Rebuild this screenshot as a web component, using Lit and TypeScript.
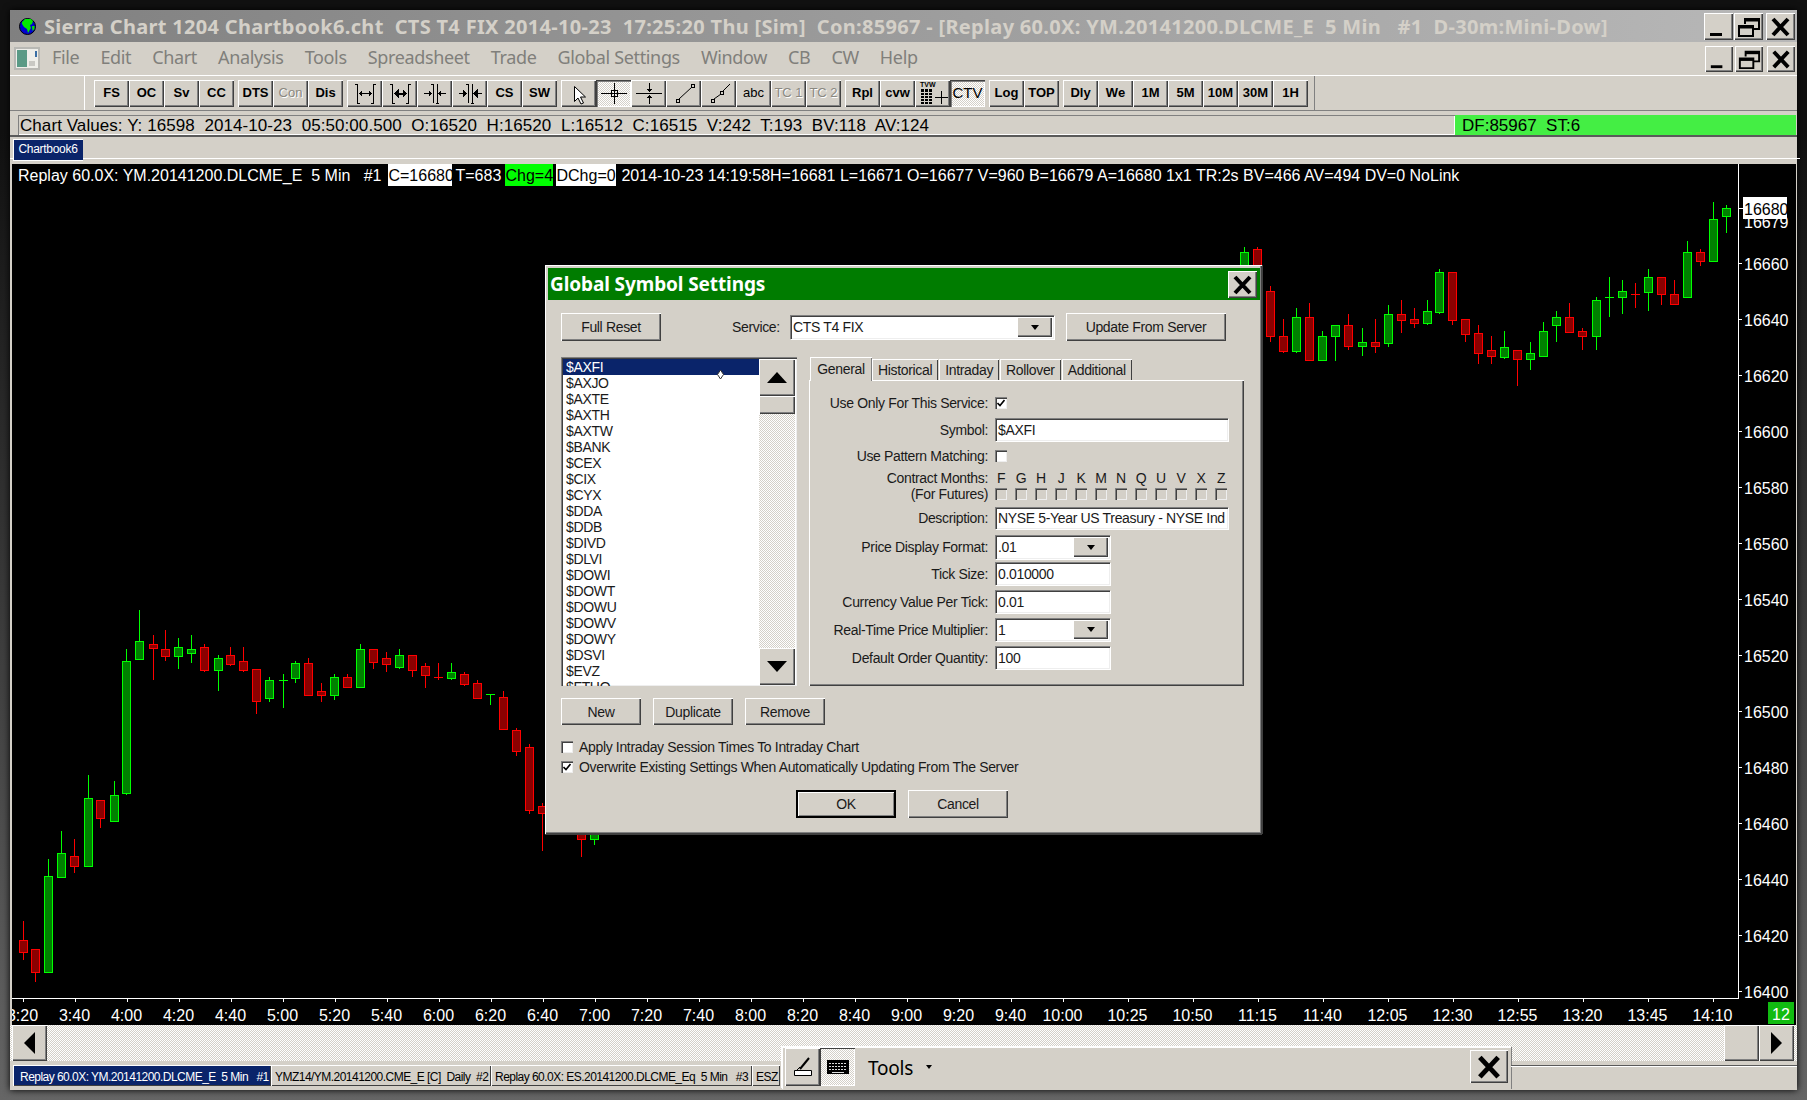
import { LitElement, html, css, svg } from "lit";
import { customElement } from "lit/decorators.js";

type C = [number, number, number, number, number, string];
// Candles measured from the reference: [x, wickTop, bodyTop, bodyBottom, wickBottom, colour]
const left: C[] = [
[63,995,1053,1088,1113,"r"],[99,1080,1080,1148,1178,"r"],[135,810,862,1148,1148,"g"],[172,726,792,863,863,"g"],
[208,750,801,830,852,"r"],[245,558,628,830,834,"g"],[281,633,633,686,717,"r"],[318,576,618,695,695,"g"],
[354,180,216,611,618,"g"],[390,63,156,209,209,"g"],[427,138,166,176,273,"r"],[463,123,181,200,216,"r"],
[499,147,175,200,240,"g"],[536,138,181,191,222,"g"],[572,165,175,242,249,"r"],[609,198,208,242,306,"g"],
[645,174,199,224,231,"r"],[681,174,217,242,249,"r"],[718,240,240,335,375,"r"],[754,264,274,326,339,"g"],
[791,255,274,275,357,"g"],[827,216,223,266,282,"g"],[863,207,222,317,317,"r"],[900,282,307,317,339,"r"],
[936,255,265,317,333,"g"],[972,255,265,293,297,"r"],[1009,165,181,293,297,"g"],[1045,181,181,218,240,"r"],
[1082,189,208,224,249,"r"],[1118,180,199,233,240,"g"],[1154,199,199,242,264,"r"],[1191,222,232,257,297,"r"],
[1227,222,265,266,273,"r"],[1264,222,250,266,273,"g"],[1300,249,256,284,291,"r"],[1336,273,283,326,326,"r"],
[1373,316,316,317,348,"g"],[1409,306,325,419,423,"r"],[1446,417,424,485,501,"r"],[1482,465,475,662,675,"r"],
[1518,642,652,671,786,"r"]];
const right: C[] = [
[12,205,220,300,300,"g"],[48,205,211,300,300,"r"],
[84,321,337,472,488,"r"],[120,420,472,515,521,"r"],[156,387,415,515,521,"g"],[192,372,415,542,545,"r"],
[228,456,472,542,542,"g"],[264,439,439,472,545,"g"],[300,405,439,500,513,"r"],[336,447,490,500,530,"g"],
[372,420,490,500,521,"r"],[408,378,406,491,503,"g"],[444,363,406,422,461,"r"],[480,387,421,431,446,"r"],
[516,363,397,431,437,"g"],[551,270,280,398,404,"g"],[587,280,280,422,437,"r"],[623,421,421,464,488,"r"],
[659,438,463,523,554,"r"],[695,471,514,532,554,"r"],[731,456,505,533,539,"g"],[767,514,514,541,621,"r"],
[803,489,523,541,572,"g"],[839,429,457,532,532,"g"],[875,397,415,439,488,"g"],[911,372,415,458,458,"r"],
[947,447,457,472,512,"r"],[983,354,364,472,512,"g"],[1019,294,355,356,413,"g"],[1055,303,337,355,404,"g"],
[1091,312,346,347,386,"r"],[1127,270,295,338,395,"g"],[1163,295,295,346,377,"r"],[1199,303,346,374,374,"r"],
[1235,186,220,355,355,"g"],[1271,210,220,247,260,"r"],[1307,69,121,247,247,"g"],[1343,78,88,112,161,"g"]];

const toPage = (d: C, sx: number, x0: number, y0: number): C => [
  Math.round(x0 + d[0] / sx), Math.round(y0 + d[1] / 3), Math.round(y0 + d[2] / 3),
  Math.round(y0 + d[3] / 3), Math.round(y0 + d[4] / 3), d[5]];

const candles: C[] = [
  ...left.map((d) => toPage(d, 2.8, 0, 590)),
  ...right.map((d) => toPage(d, 2.765, 1240, 180)),
  [581, 835, 835, 840, 858, "r"],
  [594, 835, 835, 840, 846, "g"],
];

const earlyTimes = ["3:20","3:40","4:00","4:20","4:40","5:00","5:20","5:40","6:00","6:20","6:40","7:00","7:20","7:40","8:00","8:20","8:40","9:00","9:20","9:40","10:00"];
const lateTimes = ["10:25","10:50","11:15","11:40","12:05","12:30","12:55","13:20","13:45","14:10"];
const prices = Array.from({ length: 14 }, (_, i) => 16660 - i * 20);

const symbols = ["$AXFI","$AXJO","$AXTE","$AXTH","$AXTW","$BANK","$CEX","$CIX","$CYX","$DDA","$DDB","$DIVD","$DLVI","$DOWI","$DOWT","$DOWU","$DOWV","$DOWY","$DSVI","$EVZ","$FTHO"];
const months = ["F","G","H","J","K","M","N","Q","U","V","X","Z"];

const I = (body: unknown) => html`<svg class="ic" viewBox="0 0 34 27" width="34" height="27" fill="none" stroke="#000" stroke-width="1" shape-rendering="crispEdges">${body}</svg>`;
const bar = (x: number) => svg`<path d="M${x + 0.5} 4V23"/>`;
const icons: Record<string, unknown> = {
  a: I(svg`<path d="M9.5 4V23M7 4h3M9 23h3M25.5 4V23M25 4h3M23 23h3M12 13.5h11M14 11.5l-2 2 2 2M21 11.5l2 2-2 2"/>`),
  b: I(svg`<path d="M9.5 4V23M7 4h3M9 23h3M25.5 4V23M25 4h3M23 23h3" /><path d="M12 13.5h11" stroke-width="2"/><path d="M15 10v7l-3-3.500zM20 10v7l3-3.500z" fill="#000"/>`),
  c: I(svg`${bar(15)}${bar(19)}<path d="M6 13.500h7M11 11.500l2 2-2 2M21 13.500h7M23 11.500l-2 2 2 2M13 4h3M18 23h3"/>`),
  d: I(svg`${bar(15)}${bar(19)}<path d="M6 13.500h5M24 13.500h5M13 4h3M18 23h3"/><path d="M10 10v7l3-3.500zM24 10v7l-3-3.500z" fill="#000"/>`),
  arrow: I(svg`<path d="M12.500 6.500v15l3.500-3.500 3 6 2.500-1-3-6h5z" fill="#fff" stroke="#000" shape-rendering="auto"/>`),
  cross: I(svg`<path d="M4 13.500h26M17.500 3v21"/><rect x="14.500" y="10.500" width="6" height="6"/>`),
  hline: I(svg`<path d="M4 13.500h26"/><path d="M17.500 3v8M17.500 16v8M15.500 9l2 2 2-2M15.500 18l2-2 2 2"/>`),
  line: I(svg`<rect x="9.500" y="19.500" width="3" height="3"/><rect x="24.500" y="4.500" width="3" height="3"/><path d="M12 19L25 7" shape-rendering="auto"/>`),
  ray: I(svg`<rect x="9.500" y="19.500" width="3" height="3"/><rect x="18.500" y="11.500" width="3" height="3"/><path d="M12 19l7-5M21 11l7-7" shape-rendering="auto"/>`),
  tvw: html`<svg class="ic" viewBox="0 0 34 27" width="34" height="27" shape-rendering="crispEdges"><text x="4" y="7" font-size="7" font-weight="700" font-family="Liberation Sans" fill="#000">TVW</text><path d="M5 9h11v15H5z" fill="#000"/><path d="M5 12.500h11M5 15.500h11M5 18.500h11M5 21.500h11M8.500 9v15M12.500 9v15" stroke="#d4d0c8"/><path d="M19 17.500h13M25.500 11v13" stroke="#000" fill="none"/></svg>`,
};

type B = { t?: string; i?: string; dis?: boolean; on?: boolean; bold?: boolean };
const groups: B[][] = [
  [{ t: "FS" }, { t: "OC" }, { t: "Sv" }, { t: "CC" }],
  [{ t: "DTS" }, { t: "Con", dis: true }, { t: "Dis" }],
  [{ i: "a" }, { i: "b" }, { i: "c" }, { i: "d" }, { t: "CS" }, { t: "SW" }],
  [{ i: "arrow" }, { i: "cross", on: true }, { i: "hline" }, { i: "line" }, { i: "ray" }, { t: "abc", bold: false }, { t: "TC 1", dis: true }, { t: "TC 2", dis: true }],
  [{ t: "Rpl" }, { t: "cvw" }, { i: "tvw" }, { t: "CTV", on: true, bold: false }],
  [{ t: "Log" }, { t: "TOP" }],
  [{ t: "Dly" }, { t: "We" }, { t: "1M" }, { t: "5M" }, { t: "10M" }, { t: "30M" }, { t: "1H" }],
];

const menus = ["File","Edit","Chart","Analysis","Tools","Spreadsheet","Trade","Global Settings","Window","CB","CW","Help"];
const tabs = ["General","Historical","Intraday","Rollover","Additional"];
const docTabs = ["YMZ14/YM.20141200.CME_E [C]  Daily  #2", "Replay 60.0X: ES.20141200.DLCME_Eq  5 Min   #3", "ESZ"];

const minBtn = html`<svg viewBox="0 0 29 27" width="100%" height="100%"><path d="M6 20h12v3H6z" fill="#000"/></svg>`;
const resBtn = html`<svg viewBox="0 0 29 27" width="100%" height="100%" fill="none" stroke="#000" stroke-width="2"><path d="M11 11V6h14v10h-6"/><path d="M11 7h14" stroke-width="3"/><path d="M5 13h14v10H5z" fill="#d4d0c8"/><path d="M5 14h14" stroke-width="3"/></svg>`;
const xBtn = html`<svg viewBox="0 0 29 27" width="100%" height="100%" stroke="#000" stroke-width="4"><path d="M7 6l15 16M22 6L7 22"/></svg>`;

@customElement("app-root")
export class AppRoot extends LitElement {
  static styles = css`
    :host { display: block; width: 1807px; height: 1100px; position: relative; overflow: hidden;
      background: linear-gradient(to bottom, #111 0, #111 12%, #666 100%);
      font-family: "Liberation Sans", Arial, sans-serif; color: #000; }
    .window { position: absolute; left: 10px; top: 10px; width: 1787px; height: 1080px; background: #d4d0c8;
      box-shadow: 0 0 7px #000; display: flex; flex-direction: column; }
    .title { height: 32px; flex: none; display: flex; align-items: center; background: linear-gradient(to right, #808080, #b8b8b8); color: #d4d0c8; }
    .title svg.globe { margin-left: 9px; flex: none; }
    .title .cap { margin-left: 8px; font: 700 20px "Noto Sans", sans-serif; white-space: pre; flex: 1; letter-spacing: 0.31px; }
    .wbtns { display: flex; flex: none; margin-right: 2px; gap: 1px; }
    .tb { width: 29px; height: 27px; background: #d4d0c8; box-shadow: inset 1px 1px #fff, inset -1px -1px #404040, inset -2px -2px #808080; }
    .wbtns .gap { margin-left: 2px; }
    .menu { height: 33px; flex: none; display: flex; align-items: center; border-bottom: 1px solid #fff; box-sizing: content-box; }
    .doc { margin-left: 4px; width: 26px; height: 23px; flex: none; }
    .menu .items { display: flex; margin-left: 12px; gap: 21px; flex: 1; color: #807f7b; font: 18px/28px "Noto Sans", sans-serif; letter-spacing: -0.35px; padding-bottom: 3px; }
    .menu .wbtns { margin-right: 2px; gap: 2px; }
    .menu .tb { width: 28px; height: 26px; }
    .toolbar { height: 35px; flex: none; display: flex; align-items: center; padding-left: 74px; border-bottom: 1px solid #808080; box-sizing: border-box; }
    .toolbar .holder { display: flex; align-items: center; border-left: 1px solid #fff; padding-left: 9px; border-right: 1px solid #808080; padding-right: 6px; height: 34px; }
    .grp { display: flex; margin-right: 4px; }
    .grp:last-child { margin-right: 0; }
    .btn { width: 35px; height: 27px; flex: none; display: flex; align-items: center; justify-content: center; box-sizing: border-box;
      background: #d4d0c8; box-shadow: inset 1px 1px #fff, inset -1px -1px #404040, inset -2px -2px #808080; font-size: 13px; font-weight: 700; overflow: hidden; padding-bottom: 2px; }
    .btn:has(svg) { padding-bottom: 0; }
    .btn.dis { color: #8a8880; font-weight: 400; text-shadow: 1px 1px #fff; }
    .btn.reg { font-weight: 400; }
    .btn.on { background-color: #fff; background-image: conic-gradient(#fff 25%, #d4d0c8 0 50%, #fff 0 75%, #d4d0c8 0); background-size: 2px 2px;
      box-shadow: inset 1px 1px #404040, inset 2px 2px #808080, inset -1px -1px #fff; }
    .btn .ic { flex: none; }
    .btn.on.reg { font-size: 15px; }
    .info { height: 26px; flex: none; display: flex; border-bottom: 2px solid #5a5a5a; box-sizing: border-box; padding: 4px 0 0 8px; font-size: 17px; white-space: pre; }
    .info .vals { width: 1437px; height: 20px; box-sizing: border-box; line-height: 22px; padding-left: 2px; letter-spacing: 0.07px; box-shadow: inset 1px 1px #808080, inset -1px -1px #fff; }
    .info .st { width: 341px; height: 20px; line-height: 22px; background: #44ee44; padding-left: 7px; box-sizing: border-box; }
    .tabrow { height: 27px; flex: none; padding-left: 3px; }
    .tabrow .t { position: relative; width: 70px; height: 21px; margin-top: 2px; background: #0a246a; color: #fff; font-size: 12px; line-height: 21px; text-align: center; box-shadow: 0 1px #fff, inset 1px 1px #fff; letter-spacing: -0.3px; }
    .tabrow::after { content: ""; display: block; height: 1px; background: #fff; margin: -2px -3px 0 -3px; }
    .chart { position: relative; margin-left: 2px; width: 1784px; height: 861px; flex: none; background: #000; overflow: hidden; }
    .chart > svg { display: block; }
    .chart text { font-family: "Liberation Sans", sans-serif; font-size: 16px; fill: #fff; }
    .hdr { position: absolute; left: 6px; top: 0; height: 22px; display: flex; align-items: flex-start; color: #fff; font-size: 16px; line-height: 24px; white-space: pre; }
    .hdr .box { background: #fff; color: #000; overflow: hidden; height: 22px; flex: none; }
    .hdr .box.g { background: #00ff00; }
    .scroll { height: 36px; flex: none; display: flex; padding: 0 3px 0 2px; justify-content: space-between;
      background-image: conic-gradient(#fff 25%, #d4d0c8 0 50%, #fff 0 75%, #d4d0c8 0); background-size: 2px 2px; }
    .scroll .tb { width: 35px; height: 36px; display: flex; align-items: center; justify-content: center; }
    .scroll .r { display: flex; }
    .bottom { flex: 1; position: relative; display: flex; align-items: flex-start; padding: 4px 0 0 3px; }
    .bottom::after { content: ""; position: absolute; left: 1501px; right: 0; top: 4px; height: 2px; background: linear-gradient(#5a5a5a 50%, #fff 50%); }
    .dtab { height: 21px; flex: none; box-sizing: border-box; font-size: 12px; line-height: 25px; padding-left: 4px; white-space: pre; overflow: hidden; letter-spacing: -0.53px;
      box-shadow: inset 1px 1px #fff, inset -1px -1px #404040; }
    .dtab.sel { background: #0a246a; color: #fff; width: 258px; padding-left: 7px; }
    .tools { position: absolute; left: 772px; top: -14px; width: 729px; height: 42px; background: #d4d0c8; box-sizing: border-box;
      box-shadow: inset 1px 1px #fff, -1px -1px #fff, 1px 0 #808080; display: flex; align-items: flex-start; padding: 1px 0 0 3px; }
    .tools .p { width: 35px; height: 38px; display: flex; align-items: center; justify-content: center; flex: none; background: #d4d0c8;
      box-shadow: inset 1px 1px #fff, inset -1px -1px #404040, inset -2px -2px #808080; }
    .tools .p.on { background-image: conic-gradient(#fff 25%, #d4d0c8 0 50%, #fff 0 75%, #d4d0c8 0); background-size: 2px 2px; box-shadow: inset 1px 1px #404040, inset -1px -1px #fff; }
    .tools .lbl { margin: 7px 0 0 13px; font: 19px "Noto Sans", sans-serif; letter-spacing: -0.2px; }
    .tools .caret { margin: 17px 0 0 13px; width: 0; height: 0; border: 3px solid transparent; border-top: 4px solid #000; border-bottom: 0; flex: 1; max-width: 0; }
    .tools .x { margin: 2px 3px 0 auto; width: 38px; height: 33px; }

    .dialog { position: absolute; left: 535px; top: 255px; width: 717px; height: 569px; box-sizing: border-box; background: #d4d0c8; padding: 3px;
      box-shadow: inset 1px 1px #fff, inset -1px -1px #404040, inset -2px -2px #808080, 0 1px #404040, 1px 0 #404040;
      font-size: 14px; letter-spacing: -0.34px; color: #1a1a1a; }
    .dtitle { height: 32px; background: #007c00; color: #fff; display: flex; align-items: center; padding-left: 2px; font: 700 19px "Noto Sans", sans-serif; letter-spacing: -0.1px; margin-right: -1px; }
    .dtitle span { flex: 1; }
    .dtitle .tb { width: 29px; height: 27px; margin-right: 3px; }
    .dbody { padding: 13px 0 0 13px; display: flex; flex-direction: column; }
    .r1 { display: flex; align-items: center; height: 28px; }
    .pb { height: 28px; display: flex; align-items: center; justify-content: center; flex: none; box-sizing: border-box; background: #d4d0c8;
      box-shadow: inset 1px 1px #fff, inset -1px -1px #404040, inset -2px -2px #808080; }
    .w100 { width: 100px; } .w160 { width: 160px; } .w80 { width: 80px; }
    .svc { margin-left: 71px; width: 49px; white-space: pre; }
    .sp9 { width: 9px; } .sp12 { width: 12px; }
    .sunk { box-sizing: border-box; background: #fff; box-shadow: inset 1px 1px #808080, inset 2px 2px #404040, inset -1px -1px #eee, 1px 1px #fff; padding: 0 0 0 3px; display: flex; align-items: center; white-space: pre; overflow: hidden; flex: none; }
    .combo { padding-right: 2px; justify-content: space-between; }
    .combo .arrow { width: 35px; height: calc(100% - 4px); margin-right: 0; flex: none; display: flex; align-items: center; justify-content: center; background: #d4d0c8; box-shadow: inset 1px 1px #fff, inset -1px -1px #404040, inset -2px -2px #808080; }
    .arrow i { width: 0; height: 0; border: 4px solid transparent; border-top: 5px solid #000; border-bottom: 0; }
    .main { display: flex; height: 329px; margin-top: 16px; }
    .list { position: relative; width: 236px; height: 329px; box-sizing: border-box; background: #fff; padding: 2px 0 0 2px; overflow: hidden; flex: none;
      box-shadow: inset 1px 1px #808080, inset 2px 2px #404040, inset -1px -1px #eee; display: flex; }
    .rows { width: 196px; flex: none; line-height: 16px; overflow: hidden; }
    .rows div { height: 16px; padding-left: 3px; }
    .rows .sel { background: #0a246a; color: #fff; }
    .mark { position: absolute; left: 156px; top: 13px; }
    .sb { width: 36px; flex: none; display: flex; flex-direction: column; height: 326px; background-image: conic-gradient(#fff 25%, #d4d0c8 0 50%, #fff 0 75%, #d4d0c8 0); background-size: 2px 2px; }
    .sb .s { height: 37px; flex: none; display: flex; align-items: center; justify-content: center; background: #d4d0c8; box-shadow: inset 1px 1px #fff, inset -1px -1px #404040, inset -2px -2px #808080; }
    .sb .th { height: 18px; }
    .sb .end { margin-top: auto; }
    .tabs { margin-left: 12px; width: 435px; display: flex; flex-direction: column; flex: none; }
    .strip { height: 23px; display: flex; align-items: flex-end; padding-left: 1px; flex: none; position: relative; z-index: 1; }
    .tabb { height: 21px; line-height: 22px; padding: 0 6px; box-sizing: border-box; box-shadow: inset 1px 1px #fff, inset -1px 0 #404040; margin-right: 1px; margin-bottom: 0; flex: none; }
    .tabb.on { height: 24px; line-height: 24px; width: 62px; text-align: center; margin-bottom: -1px; background: #d4d0c8; box-shadow: inset 1px 1px #fff, inset -1px 0 #808080; padding: 0; margin-right: 0; }
    .page { flex: 1; box-sizing: border-box; padding: 12px 0 0 0; box-shadow: inset 1px 1px #fff, inset -1px -1px #404040, inset -2px -2px #808080; }
    .row { display: flex; align-items: center; }
    .row label { width: 179px; text-align: right; margin-right: 7px; flex: none; white-space: pre; }
    .cb { width: 12px; height: 12px; flex: none; box-sizing: border-box; background: #fff; box-shadow: inset 1px 1px #808080, inset 2px 2px #404040, inset -1px -1px #eee; display: flex; align-items: center; justify-content: center; }
    .cb.off { background: #d4d0c8; }
    .cb svg { display: block; }
    .mrow { display: flex; gap: 8px; }
    .mrow span { width: 12px; text-align: center; flex: none; }
    .btnrow { display: flex; gap: 12px; margin-top: 12px; height: 27px; }
    .btnrow .pb { height: 27px; }
    .opt { display: flex; align-items: center; height: 20px; white-space: pre; }
    .opt .cb { margin-right: 6px; }
    .opts { margin-top: 12px; display: flex; flex-direction: column; }
    .okrow { display: flex; gap: 12px; margin: 13px 0 0 235px; }
    .ok { box-shadow: inset 2px 2px #000, inset -2px -2px #000, inset 3px 3px #fff, inset -3px -3px #808080; }
  `;

  private candle(c: C) {
    const [x, wt, bt, bb, wb, col] = c;
    const stroke = col === "g" ? "#00ff00" : "#ff0000";
    const fill = col === "g" ? "#008000" : "#8b0000";
    const doji = bb - bt <= 1;
    return svg`<path d="M${x + 0.5} ${wt}V${wb}" stroke="${stroke}"/>
      ${doji
        ? svg`<path d="M${x - 4} ${bt + 0.5}h9" stroke="${stroke}"/>`
        : svg`<rect x="${x - 3.5}" y="${bt + 0.5}" width="8" height="${bb - bt}" fill="${fill}" stroke="${stroke}"/>`}`;
  }

  private chartSvg() {
    const early = earlyTimes.map((t, i) => [t, 22.5 + i * 52] as [string, number]);
    const late = lateTimes.map((t, i) => [t, 1127.5 + i * 65] as [string, number]);
    const times = [...early, ...late];
    return html`<svg viewBox="12 165 1784 861" width="1784" height="861" shape-rendering="crispEdges">
      ${candles.map((c) => this.candle(c))}
      <path d="M1738.500 165V999.500H12" stroke="#fff" fill="none"/>
      ${times.map(([t, x]) => svg`<path d="M${Math.round(x) + 0.5} 999v4" stroke="#fff"/><text x="${x}" y="1022" text-anchor="middle">${t}</text>`)}
      ${prices.map((p, i) => svg`<path d="M1738 ${264 + i * 56 + 0.5}h4" stroke="#fff"/><text x="1744" y="${264 + i * 56 + 7}">${p}</text>`)}
      <text x="1744" y="229">16679</text>
      <rect x="1743" y="198" width="44" height="22" fill="#fff"/>
      <path d="M1738 209.500h5" stroke="#fff"/>
      <svg x="1743" y="198" width="44" height="22"><text x="1" y="18" style="fill:#000">16680</text></svg>
      <rect x="1768" y="1003" width="26" height="22" fill="#11bb11"/>
      <text x="1781" y="1021" text-anchor="middle">12</text>
    </svg>`;
  }

  private button(b: B) {
    const cls = ["btn", b.dis ? "dis" : "", b.on ? "on" : "", b.bold === false ? "reg" : ""].join(" ");
    return html`<div class="${cls}">${b.i ? icons[b.i] : b.t}</div>`;
  }

  private row(h: number, mt: number, label: string, content: unknown) {
    return html`<div class="row" style="height:${h}px;margin-top:${mt}px"><label>${label}</label>${content}</div>`;
  }

  private check(on: boolean) {
    return html`<div class="cb">${on ? html`<svg width="8" height="8" viewBox="0 0 8 8"><path d="M0.500 4l2.500 2.500L7.500 1" fill="none" stroke="#000" stroke-width="1.600"/></svg>` : ""}</div>`;
  }

  private dialog() {
    const field = (w: number, h: number, t: string) => html`<div class="sunk" style="width:${w}px;height:${h}px">${t}</div>`;
    const combo = (w: number, h: number, t: string) => html`<div class="sunk combo" style="width:${w}px;height:${h}px"><span>${t}</span><div class="arrow"><i></i></div></div>`;
    return html`<div class="dialog">
      <div class="dtitle"><span>Global Symbol Settings</span><div class="tb">${xBtn}</div></div>
      <div class="dbody">
        <div class="r1">
          <div class="pb w100">Full Reset</div>
          <div class="svc">Service:</div>
          <div class="sp9"></div>
          ${combo(264, 24, "CTS T4 FIX")}
          <div class="sp12"></div>
          <div class="pb w160">Update From Server</div>
        </div>
        <div class="main">
          <div class="list">
            <div class="rows">${symbols.map((s, i) => html`<div class="${i === 0 ? "sel" : ""}">${s}</div>`)}</div>
            <svg class="mark" width="7" height="9" viewBox="0 0 7 9"><path d="M3.500 0l3 4.500-3 4.500-3-4.500z" fill="#fff" stroke="#333"/></svg>
            <div class="sb">
              <div class="s"><svg width="20" height="11"><path d="M10 0l10 11H0z" fill="#000"/></svg></div>
              <div class="s th"></div>
              <div class="s end"><svg width="20" height="11"><path d="M10 11L20 0H0z" fill="#000"/></svg></div>
            </div>
          </div>
          <div class="tabs">
            <div class="strip">${tabs.map((t, i) => html`<div class="tabb ${i === 0 ? "on" : ""}">${t}</div>`)}</div>
            <div class="page">
              ${this.row(22, 0, "Use Only For This Service:", this.check(true))}
              ${this.row(23, 4, "Symbol:", field(233, 23, "$AXFI"))}
              ${this.row(22, 4, "Use Pattern Matching:", this.check(false))}
              ${this.row(16, 3, "Contract Months:", html`<div class="mrow">${months.map((m) => html`<span>${m}</span>`)}</div>`)}
              ${this.row(16, 0, "(For Futures)", html`<div class="mrow">${months.map(() => html`<div class="cb off"></div>`)}</div>`)}
              ${this.row(22, 5, "Description:", field(233, 22, "NYSE 5-Year US Treasury - NYSE Ind"))}
              ${this.row(24, 6, "Price Display Format:", combo(115, 24, ".01"))}
              ${this.row(23, 3, "Tick Size:", field(115, 23, "0.010000"))}
              ${this.row(23, 5, "Currency Value Per Tick:", field(115, 23, "0.01"))}
              ${this.row(23, 5, "Real-Time Price Multiplier:", combo(115, 23, "1"))}
              ${this.row(23, 5, "Default Order Quantity:", field(115, 23, "100"))}
            </div>
          </div>
        </div>
        <div class="btnrow"><div class="pb w80">New</div><div class="pb w80">Duplicate</div><div class="pb w80">Remove</div></div>
        <div class="opts">
          <div class="opt">${this.check(false)}Apply Intraday Session Times To Intraday Chart</div>
          <div class="opt">${this.check(true)}Overwrite Existing Settings When Automatically Updating From The Server</div>
        </div>
        <div class="okrow"><div class="pb w100 ok">OK</div><div class="pb w100">Cancel</div></div>
      </div>
    </div>`;
  }

  render() {
    return html`<div class="window">
        <div class="title">
          <svg class="globe" width="17" height="17" viewBox="0 0 17 17"><circle cx="8.500" cy="8.500" r="8" fill="#0000d0" stroke="#000"/><path d="M3 4l3-3h6l2 2-1 3-2 1 1 3-3 5-1-4-3-2-2-3zM13 8l2.500 0 0 3-2 2z" fill="#00e800"/></svg>
          <div class="cap">Sierra Chart 1204 Chartbook6.cht  CTS T4 FIX 2014-10-23  17:25:20 Thu [Sim]  Con:85967 - [Replay 60.0X: YM.20141200.DLCME_E  5 Min   #1  D-30m:Mini-Dow]</div>
          <div class="wbtns"><div class="tb">${minBtn}</div><div class="tb">${resBtn}</div><div class="tb gap">${xBtn}</div></div>
        </div>
        <div class="menu">
          <svg class="doc" viewBox="0 0 26 23"><rect width="26" height="23" fill="#b8b8b4"/><rect x="2" y="2" width="22" height="19" fill="#eeeeea"/><rect x="3" y="3" width="10" height="17" fill="#5a9a86"/><rect x="15" y="14" width="6" height="5" fill="#c8c8c4"/><rect x="21" y="4" width="2" height="6" fill="#3a6ea5"/></svg>
          <div class="items">${menus.map((m) => html`<span>${m}</span>`)}</div>
          <div class="wbtns"><div class="tb">${minBtn}</div><div class="tb">${resBtn}</div><div class="tb gap">${xBtn}</div></div>
        </div>
        <div class="toolbar"><div class="holder">${groups.map((g) => html`<div class="grp">${g.map((b) => this.button(b))}</div>`)}</div></div>
        <div class="info">
          <div class="vals">Chart Values: Y: 16598  2014-10-23  05:50:00.500  O:16520  H:16520  L:16512  C:16515  V:242  T:193  BV:118  AV:124</div>
          <div class="st">DF:85967  ST:6</div>
        </div>
        <div class="tabrow"><div class="t">Chartbook6</div></div>
        <div class="chart">
          ${this.chartSvg()}
          <div class="hdr">
            <span>Replay 60.0X: YM.20141200.DLCME_E  5 Min   #1</span>
            <span class="box" style="width:64px;margin-left:7px">C=16680</span>
            <span style="width:50px;margin-left:3px">T=683</span>
            <span class="box g" style="width:48px;">Chg=4</span>
            <span class="box" style="width:60px;margin-left:3px">DChg=0</span>
            <span style="margin-left:5px">2014-10-23 14:19:58</span>
            <span>H=16681 L=16671 O=16677 V=960 B=16679 A=16680 1x1 TR:2s BV=466 AV=494 DV=0 NoLink</span>
          </div>
        </div>
        <div class="scroll">
          <div class="tb"><svg width="11" height="22"><path d="M0 11L11 0V22z" fill="#000"/></svg></div>
          <div class="r"><div class="tb"></div><div class="tb"><svg width="11" height="22"><path d="M11 11L0 0V22z" fill="#000"/></svg></div></div>
        </div>
        <div class="bottom">
          <div class="dtab sel">Replay 60.0X: YM.20141200.DLCME_E  5 Min   #1</div>
          <div class="dtab" style="width:220px">${docTabs[0]}</div>
          <div class="dtab" style="width:261px">${docTabs[1]}</div>
          <div class="dtab" style="width:28px">${docTabs[2]}</div>
          <div class="tools">
            <div class="p"><svg width="24" height="24" viewBox="0 0 24 24" fill="none" stroke="#000"><path d="M3.500 15.500h17v5h-17z" fill="#fff"/><path d="M9 14L18 3" stroke-width="2"/><path d="M6 15l3-3" stroke-width="1"/></svg></div>
            <div class="p on"><svg width="24" height="18" viewBox="0 0 24 18" shape-rendering="crispEdges"><rect x="1" y="2" width="22" height="14" fill="#000"/><path d="M3 5h18M3 8h18M3 11h18" stroke="#ddd" stroke-dasharray="2 1"/><path d="M6 14h12" stroke="#ddd"/></svg></div>
            <div class="lbl">Tools</div>
            <div class="caret"></div>
            <div class="tb x">${xBtn}</div>
          </div>
        </div>
        ${this.dialog()}
      </div>`;
  }
}
